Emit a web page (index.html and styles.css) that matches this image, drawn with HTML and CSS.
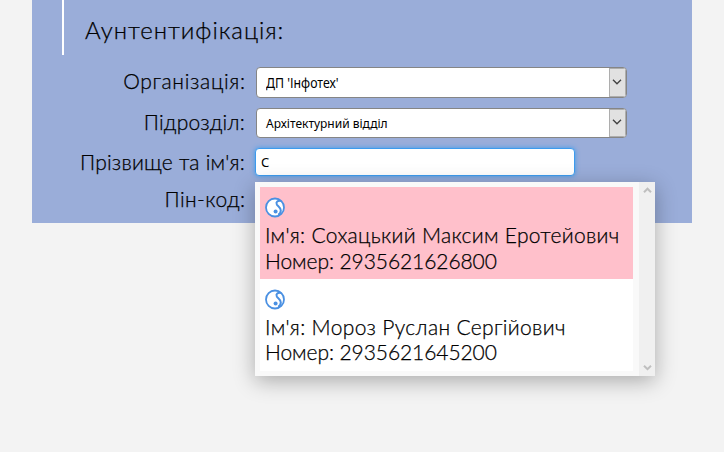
FILE: index.html
```
<!DOCTYPE html>
<html lang="uk">
<head>
<meta charset="utf-8">
<title>Аунтентифікація</title>
<link rel="stylesheet" href="styles.css">
</head>
<body>
<main class="panel">
  <header class="heading"><h1><span class="t-title">Аунтентифікація:</span></h1></header>
  <form class="form">
    <div class="row row-org">
      <label><span class="t-org">Організація:</span></label>
      <div class="select"><span class="t-infotech">ДП 'Інфотех'</span><i class="arrow"><svg width="10" height="6" viewBox="0 0 10 6"><path d="M1 .8 5 4.8 9 .8"/></svg></i></div>
    </div>
    <div class="row row-dept">
      <label><span class="t-dept">Підрозділ:</span></label>
      <div class="select small"><span class="t-arch">Архітектурний відділ</span><i class="arrow"><svg width="10" height="6" viewBox="0 0 10 6"><path d="M1 .8 5 4.8 9 .8"/></svg></i></div>
    </div>
    <div class="row row-name">
      <label><span class="t-name">Прізвище та ім'я:</span></label>
      <div class="field">
        <div class="input">С</div>
        <div class="popup">
          <div class="list">
            <div class="item selected">
              <svg class="logo" width="20" height="21" viewBox="0 0 20 21"><circle class="ring" cx="10" cy="10.5" r="9"/><path class="curve" d="M16 4C12.8 3 10.6 5 11.8 7.4c1.2 2.2 4 2.8 4 6 0 2-1 3.4-2.6 4.4"/><circle class="dot" cx="10.6" cy="14.4" r="2"/></svg>
              <p><span class="t-p1">Ім'я: Сохацький Максим Еротейович</span></p>
              <p><span class="t-num">Номер: 2935621626800</span></p>
            </div>
            <div class="item">
              <svg class="logo" width="20" height="21" viewBox="0 0 20 21"><circle class="ring" cx="10" cy="10.5" r="9"/><path class="curve" d="M16 4C12.8 3 10.6 5 11.8 7.4c1.2 2.2 4 2.8 4 6 0 2-1 3.4-2.6 4.4"/><circle class="dot" cx="10.6" cy="14.4" r="2"/></svg>
              <p><span class="t-p2">Ім'я: Мороз Руслан Сергійович</span></p>
              <p><span class="t-num">Номер: 2935621645200</span></p>
            </div>
          </div>
          <div class="scrollbar">
            <svg width="9" height="7" viewBox="0 0 9 7"><path d="M1 5.2 4.5 1.7 8 5.2"/></svg>
            <svg width="9" height="7" viewBox="0 0 9 7"><path d="M1 1.7 4.5 5.2 8 1.7"/></svg>
          </div>
        </div>
      </div>
    </div>
    <div class="row row-pin">
      <label><span class="t-pin">Пін-код:</span></label>
    </div>
  </form>
</main>
</body>
</html>
```
FILE: styles.css
```
* { box-sizing: border-box; }
body { margin: 0; height: 452px; overflow: hidden; background: #f3f3f3; color: #000; font-family: Lato, "Noto Sans", sans-serif; font-weight: 300; }
.panel { width: 660px; height: 223px; margin-left: 32px; background: #9aadd9; }
.heading { height: 55px; margin-left: 30px; border-left: 2px solid #fff; padding: 13px 0 0 21px; }
h1 { margin: 0; font-size: 24px; font-weight: 300; line-height: 34px; white-space: nowrap; }
h1, label, .item { -webkit-text-stroke: .25px #000; }
.t-title { letter-spacing: .95px; }
.t-org { letter-spacing: .68px; margin-right: -.68px; }
.t-dept { letter-spacing: .25px; }
.t-name { letter-spacing: .22px; }
.t-pin { letter-spacing: .38px; margin-right: -.38px; }
.t-p1 { letter-spacing: .32px; }
.t-p2 { letter-spacing: .34px; }
.t-num { letter-spacing: -.08px; }
.form { padding-top: 12px; }
.row { display: grid; grid-template-columns: 213px 1fr; column-gap: 11px; }
.row-org { height: 41px; }
.row-dept { height: 40px; }
.row-name { height: 37px; }
label { text-align: right; font-size: 21px; line-height: 27px; white-space: nowrap; }
.select { display: flex; align-items: center; justify-content: space-between; width: 371px; height: 31px; padding-left: 9px; background: #fff; border: 1px solid #858585; border-radius: 4px; overflow: hidden; font: 14px "Noto Sans", sans-serif; }
.select.small { height: 30px; font-size: 12px; }
.t-infotech { transform: scaleX(.88); transform-origin: left; }
.arrow { display: flex; align-items: center; justify-content: center; width: 17px; height: 100%; background: #e1e1e1; border: 1px solid #adadad; }
.arrow path { fill: none; stroke: #444; stroke-width: 1.4; }
.arrow svg { position: relative; top: -1px; left: -1px; }
.field { position: relative; margin-left: -1px; }
.input { width: 320px; height: 28px; padding-left: 5px; background: #fff; border: 1px solid #3d9bed; border-radius: 4px; box-shadow: 0 0 5px #3d9bed; font: 13px/26px "Noto Sans", sans-serif; }
.popup { position: absolute; left: 0; top: 34px; display: flex; width: 400px; height: 194px; background: #f9f9f9; box-shadow: 0 5px 20px rgba(0,0,0,.3); }
.list { width: 384px; padding: 5px 6px 5px 5px; }
.item { width: 373px; height: 92px; padding: 10px 5px 0; background: #fff; font-size: 21px; }
.item.selected { background: #ffc0cb; }
.item p { margin: 0; line-height: 26px; white-space: nowrap; }
.item:last-child p:last-child { line-height: 24px; }
.logo { display: block; margin-bottom: 4px; }
.ring { fill: #fff; stroke: #4a90e2; stroke-width: 1.8; }
.curve { fill: none; stroke: #4a90e2; stroke-width: 2; }
.dot { fill: #4a90e2; }
.scrollbar { display: flex; flex-direction: column; align-items: center; justify-content: space-between; width: 16px; padding: 5px 0; background: #f0f0f0; }
.scrollbar path { fill: none; stroke: #bfbfbf; stroke-width: 2; }
```
